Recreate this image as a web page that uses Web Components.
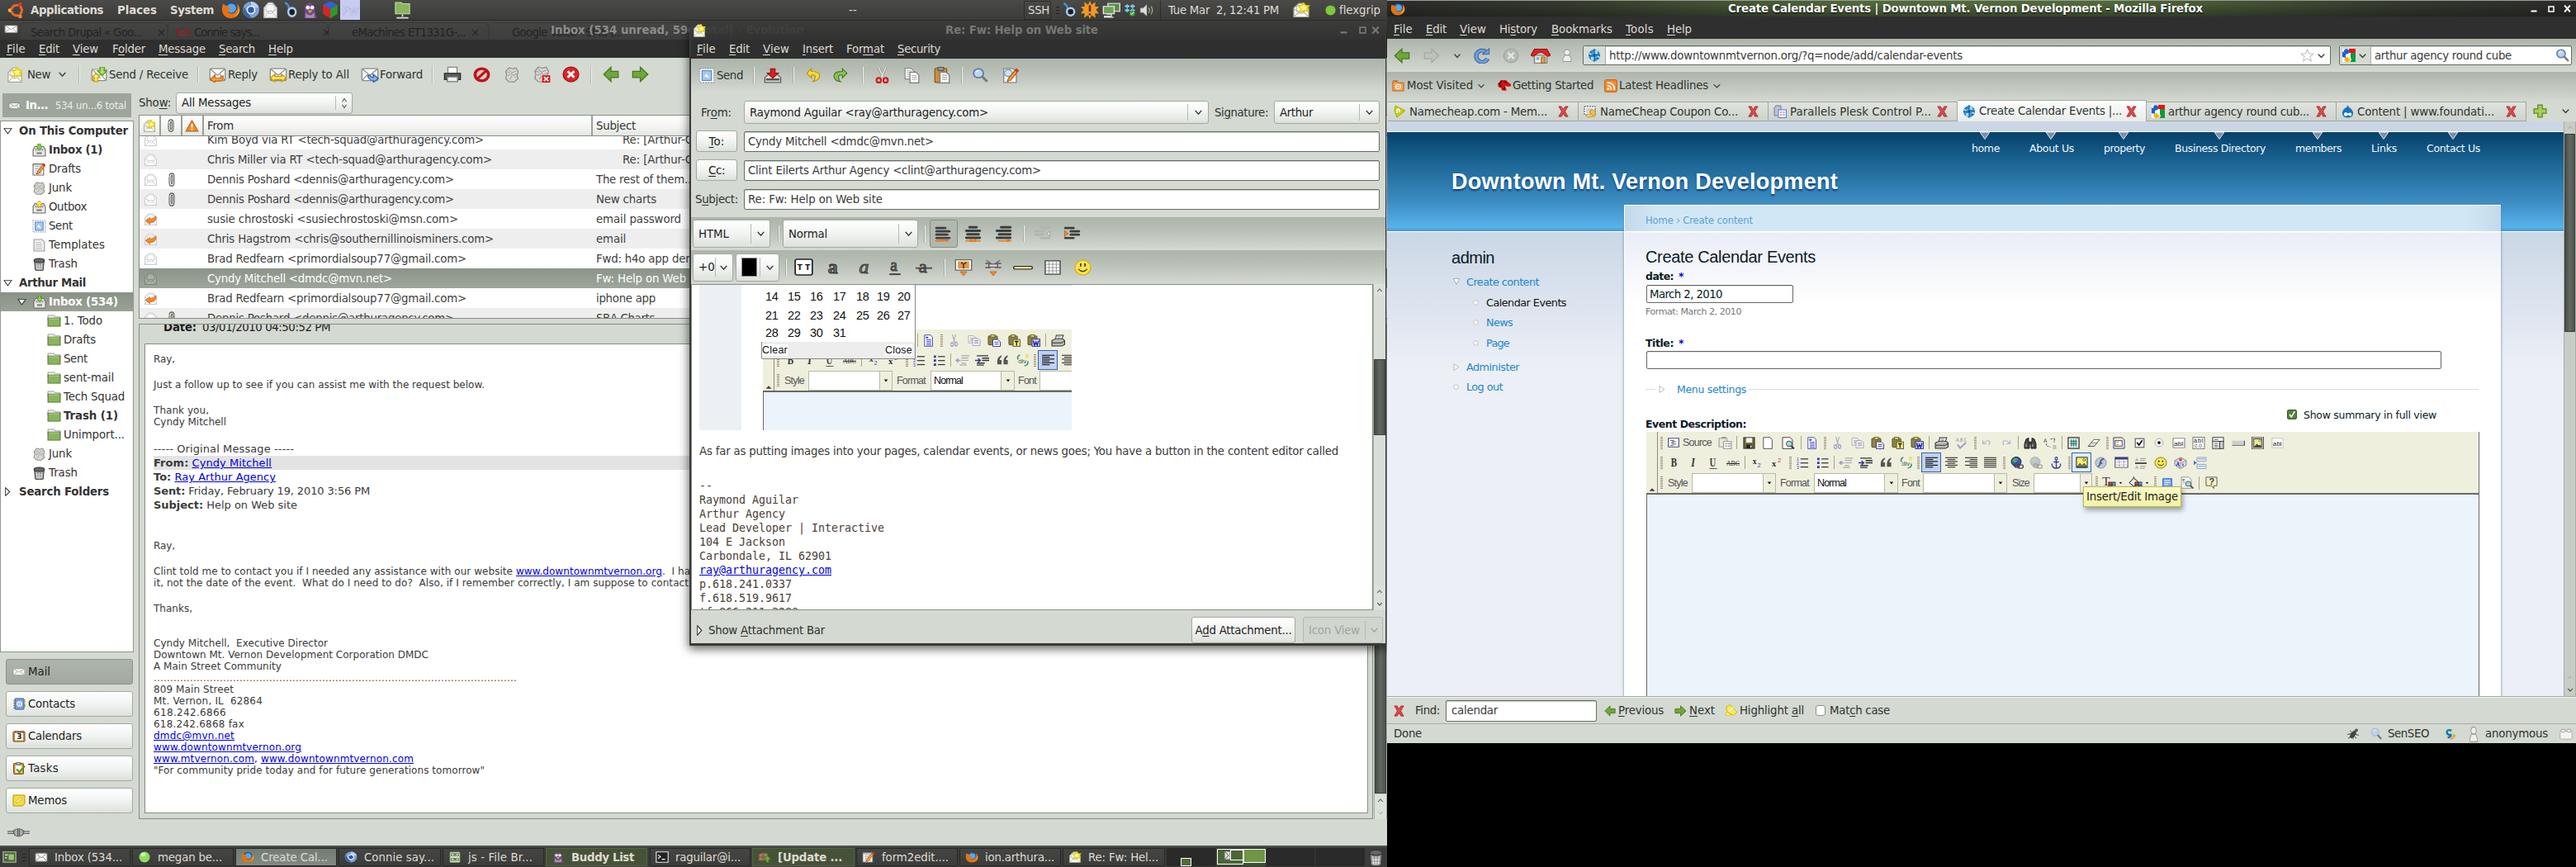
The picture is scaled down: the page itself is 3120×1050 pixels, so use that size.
<!DOCTYPE html>
<html lang="en">
<head>
<meta charset="utf-8">
<title>Desktop</title>
<style>
html,body{margin:0;padding:0;background:#000;width:3120px;height:1050px;overflow:hidden}
</style>
</head>
<body>
<desk-top></desk-top>
<script>
const BASE = `*{box-sizing:border-box}:host{display:block}
.row{display:flex;align-items:center;flex:none}
.row>span{flex:none;display:flex;align-items:center;white-space:nowrap;height:100%}
.col{display:flex;flex-direction:column}
.sep{width:1px;height:20px;background:#b3bab0;box-shadow:1px 0 #eef1ed}
.btn{display:flex;align-items:center;border:1px solid #a3aaa0;border-radius:3px;background:linear-gradient(#fff,#f3f5f3 45%,#dde1dc);color:#222;flex:none}
.in{display:flex;align-items:center;border:1px solid #666c64;border-radius:2px;background:#fff;color:#3a3a3a;box-shadow:inset 0 1px #ccd0ca;flex:none}
`;
/* ---------- icon drawings, all in a 16 x 16 box ---------- */
const env = (c='#fff',s='#8a8f88') => `<rect x="1" y="2.5" width="14" height="11.5" rx="1" fill="${c}" stroke="${s}"/><path d="M1.5 3l6.5 6 6.5-6M1.5 13.5L6 8M14.500 13.500L10 8" fill="none" stroke="${s}" stroke-width=".9"/>`;
const star = `<path d="M10 .5l1.500 2.800 3.300.2-2 2.800 1 3.200-3.300-1-3 1.600.3-3.400-2.300-2.500 3.300-.7z" fill="#fff6a0" stroke="#ecd000" stroke-width="1.300"/>`;
const openEnv = (c='#fff',s='#aaa') => `<path d="M1.500 6L6 1h4l4.500 5v9.500h-13z" fill="${c}" stroke="${s}"/><rect x="4" y="3" width="8" height="6" fill="${c}" stroke="${s}" stroke-width=".6"/><path d="M2 15l5-6h2l5 6M2 7l5 4.500h2L14 7" fill="none" stroke="${s}" stroke-width=".8"/>`;
const doc = (x,y,w,h,f='#fff',s='#777') => `<path d="M${x} ${y}h${w-3}l3 3v${h-3}h-${w}z" fill="${f}" stroke="${s}"/>`;
const lines = (x,y,w,n,d,c,sw=1) => { let r=''; for(let i=0;i<n;i++) r+=`<path d="M${x} ${y+i*d}h${w}" stroke="${c}" stroke-width="${sw}"/>`; return r; };
const firefox = `<circle cx="8" cy="8" r="7" fill="#1c4f9c"/><circle cx="8.500" cy="6.500" r="4" fill="#5aa7e0"/><path d="M1.500 2.500Q0 6 .8 9.500 2.500 15.500 8.500 15.500 15 15 15.500 8 15.500 4 13 2.200 14.500 6 12.500 9 10 12.500 6.500 10.500 4.500 9 6.500 8.200L8 7.500Q6 6.500 5.500 5 4 4 1.500 2.500z" fill="#e8720c"/><path d="M14.500 5q1 6-4 8.500 4-1 4.800-5z" fill="#ffcf3a"/>`;
const redX = `<path d="M2 1h3.500L8 5l2.500-4H14l-3.800 7L14 15h-3.500L8 11l-2.500 4H2l3.800-7z" fill="#d94a4a" stroke="#a32020" stroke-width=".8"/>`;
const google = `<rect width="16" height="16" fill="#fff"/><path d="M8 0h8v5H8z" fill="#e11"/><path d="M10 5h6v11H9q3-2 1-5z" fill="#0b9a3c"/><path d="M0 3l4 3v5L0 10z" fill="#1a5fd0"/><ellipse cx="5" cy="3.500" rx="3" ry="3.200" fill="#1a5fd0"/><ellipse cx="6" cy="13" rx="3.500" ry="3" fill="#f6b50c"/><path d="M6 7q4 1 2 5" stroke="#fff" stroke-width="2" fill="none"/>`;
const globe = `<circle cx="8" cy="8" r="7" fill="#2b8fd0"/><path d="M2 5h5v3H2zM8 2h4v4H8zM9 8h5v3H9zM4 10h4v4H4z" fill="#9fd8f4"/><path d="M8 0v16M1 8h14M3 4l10 8" stroke="#0a4c86" stroke-width="1"/>`;
const mag = (c='#5f7fa8') => `<circle cx="6.500" cy="6" r="4.800" fill="#b9d5f2" stroke="${c}" stroke-width="1.500"/><path d="M10 9.500l5 5.500" stroke="#777" stroke-width="2.400"/><path d="M4 5q1-2 3-2" stroke="#fff" fill="none"/>`;
const greenL = `<path d="M8 1v4h7v6H8v4L1 8z" fill="#6ea83a" stroke="#47761f"/>`;
const greenR = `<path d="M8 1v4H1v6h7v4l7-7z" fill="#6ea83a" stroke="#47761f"/>`;
const al = (a,c='#333') => a.map((p,i)=>`<path d="M${p[0]} ${1.500+i*2.600}h${p[1]}" stroke="${c}" stroke-width="1.300"/>`).join('');
const gal = (a,c='#3c3f3c') => a.map((p,i)=>`<path d="M${p[0]+.8} ${1.800+i*3.400}h${p[1]-1.600}" stroke="${c}" stroke-width="2.300" stroke-linecap="round"/>`).join('');
const paste = (x='') => `<rect x="1" y="2" width="11" height="11.500" rx="1" fill="#8c8446" stroke="#55502a"/><rect x="4" y=".5" width="5" height="3" fill="#ddd34a" stroke="#55502a" stroke-width=".8"/>${x}`;
const trash = `<path d="M2.500 4l1 11q4 1.500 9 0l1-11z" fill="#9a9a9a" stroke="#444"/><ellipse cx="8" cy="3.500" rx="6" ry="2.500" fill="#666" stroke="#333"/><path d="M5 7l1 8M8 7v8M11 7l-1 8M4 10h8M4 13h8" stroke="#e4e4e4" stroke-width=".7"/>`;
const junk = `<path d="M5 1l4 1 3-1 2 4-1 4 1 3-4 3.500-5-.5-3-3 1-4-1-3z" fill="#d8d8d2" stroke="#8f8f8a"/><path d="M5 3l3 3 4-2M4 9l4-2 4 4M6 13l2-4M3 5l3 1M10 8l3-1" fill="none" stroke="#999" stroke-width=".8"/>`;
const tray = `<path d="M1 7.500l2-4h10l2 4v7.500H1z" fill="#e9e9e6" stroke="#666"/><path d="M3 8h10M3 6.500h10" stroke="#888" stroke-width=".8"/><path d="M5 10.500h6v2H5z" fill="#777"/>`;
const folder = `<path d="M1 1h7l1 2h6v4H1z" fill="#f1f1ee" stroke="#888" stroke-width=".8"/><rect x="1" y="4.500" width="14" height="10.500" fill="#8bb55c" stroke="#507a2c"/><path d="M2 5.500h12" stroke="#b6d492"/>`;
const person = (c='#eee') => `<circle cx="8" cy="4.500" r="3.500" fill="${c}" stroke="#999"/><path d="M5 8h6l2 4v3.500H3V12z" fill="${c}" stroke="#999"/>`;
const pencil = `<path d="M13 1l2 2-7 10-3 1 1-3z" fill="#f0a030" stroke="#a5541c" stroke-width=".8"/><path d="M13 1l2 2-1.500 2-2-2z" fill="#e03030"/>`;
const smile = `<circle cx="8" cy="8" r="7" fill="#f7e95e" stroke="#8a7a1a"/><circle cx="5.700" cy="6" r="1" fill="#222"/><circle cx="10.300" cy="6" r="1" fill="#222"/><path d="M4 9q4 5 8 0" fill="none" stroke="#333"/>`;
const tx = (s,x,y,sz,c='#333',e='') => `<text x="${x}" y="${y}" font-size="${sz}" fill="${c}" ${e}>${s}</text>`;
const serif = 'font-family="Liberation Serif" font-weight="bold"';
const pic = `<rect x="1" y="1" width="14" height="14" fill="#f6ef6a" stroke="#111"/><path d="M1.500 14.500l4-5 2.500 3 3-3 3.500 5z" fill="#777" stroke="#111" stroke-width=".7"/><circle cx="11" cy="4.500" r="1.500" fill="#fff" stroke="#111" stroke-width=".7"/>`;
const ICON = {
ubuntu:`<circle cx="8.500" cy="8" r="4.800" fill="none" stroke="#e8642c" stroke-width="2.400"/><circle cx="2.300" cy="8" r="1.800" fill="#f2b632"/><circle cx="11.700" cy="2.300" r="1.800" fill="#d93a20"/><circle cx="11.700" cy="13.700" r="1.800" fill="#f0872c"/><path d="M3.500 8h2M11 4l-1 1.500M11 12l-1-1.500" stroke="#3c3c3a" stroke-width="1"/>`,
firefox,
chromium:`<circle cx="8" cy="8" r="7.300" fill="#7ba3d4"/><path d="M8 .7A7.300 7.300 0 0 1 15 6H8z" fill="#b7d0ec"/><path d="M1.500 5l4 6 3 4.300Q2 15 .8 9z" fill="#3b66a6"/><circle cx="8" cy="8" r="3.300" fill="#2c5aa8" stroke="#eef" stroke-width="1.200"/>`,
evo:openEnv('#f6f6f6','#bbb'), env:env(), envw:env('#f3f4f2','#7d827b'), envg:openEnv('#fff','#ccc'), envgs:openEnv('#a9b0a6','#7e867c'),
bblue:`<path d="M2 1q3 1 4 4v7" stroke="#4d90e0" stroke-width="2" fill="none"/><circle cx="9.500" cy="10" r="4" fill="#1d1d1d" stroke="#a9cdf4" stroke-width="2.200"/>`,
pidgin:`<path d="M3 4q5-6 9 0l1 8 2 3H2l1-3z" fill="#6e4a86"/><circle cx="6" cy="5.500" r="1.800" fill="#fff"/><circle cx="10" cy="5.500" r="1.800" fill="#fff"/><path d="M6 8h4l-2 3z" fill="#f3a12c"/><path d="M4 10q4 5 8 0v5H4z" fill="#a98bc0"/>`,
cube:`<path d="M8 .5l7 3v8l-7 4-7-4v-8z" fill="#d22"/><path d="M8 7l7-3.500v8l-7 4z" fill="#2a9a2a"/><path d="M8 .5l7 3L8 7 1 3.500z" fill="#2d62d8"/>`,
pw:`<rect width="16" height="16" fill="#c6cdf0"/>${tx('Pw',1.500,12,9.500,'#eef0fb','font-family="DejaVu Sans" stroke="#8d95c8" stroke-width=".3"')}`,
netfolder:`<path d="M2 1.500h5l1 1h6v9H2z" fill="#8bb55c" stroke="#c4dca6" stroke-width=".7"/><path d="M8 12v2M3 15h10" stroke="#ddd" stroke-width="1.200"/>`,
burst:`<path d="M8 0l1.500 3.500L13 1l-.5 4L16 5l-2.500 3L16 11l-3.500 0 .5 4-3.500-2.500L8 16l-1.500-3.500L3 15l.5-4L0 11l2.500-3L0 5h3.500L3 1l3.500 2.500z" fill="#f39a1e"/><path d="M8 4v5.500M8 11v1.800" stroke="#5a2c00" stroke-width="1.800"/>`,
net:`<rect x="5" y="1" width="10.500" height="8" fill="#5a8a48" stroke="#ddd"/><rect x="1" y="4" width="9.500" height="7.500" fill="#6fa057" stroke="#e6e6e0"/><path d="M4 12h4v2H2v1h8" stroke="#ddd" fill="none"/>`,
dropbox:`<path d="M4.500 1L8 3.500 4.500 6 1 3.500zM11.500 1L15 3.500 11.500 6 8 3.500zM4.500 6L8 8.500 4.500 11 1 8.500zM11.500 6L15 8.500 11.500 11 8 8.500z" fill="#7cc4ee"/><circle cx="11" cy="12" r="3.600" fill="#3fa13a"/><path d="M9 12l1.500 1.500L13 10.500" stroke="#fff" fill="none"/>`,
speaker:`<path d="M1 5.500h3l4-4v13l-4-4H1z" fill="#ddd" stroke="#888" stroke-width=".6"/><path d="M10 5q2 3 0 6M12.500 3.500q3 4.500 0 9" stroke="#8faf70" fill="none" stroke-width="1.200"/>`,
newmail:openEnv('#fff','#a9a98f')+star,
sendrecv:env()+`<path d="M9 0h4v4h2.500L11 9 6.500 4H9z" fill="#a9dd6e" stroke="#4a9a1c"/><path d="M3.500 15v-4H1l4-4.500L9 11H6.500v4z" fill="#ffe96a" stroke="#c9a400"/>`,
reply:env()+`<g transform="translate(0 4) scale(.95)"><path d="M6 5L1.500 9 6 13v-2h5q3 0 3-5h-2q0 2-2 2H6z" fill="#f7a04a" stroke="#d2600a"/></g>`,
replyall:env()+`<path d="M5 8L1 11.500 5 15v-2h6v2l4-3.500L11 8v2H5z" fill="#ffe56a" stroke="#c79c00"/>`,
forward:env()+`<path d="M11 8l4.500 4L11 16v-2q-4 0-5-5h2q1 2 3 2z" fill="#8ab4ea" stroke="#3465a4"/>`,
print:`<path d="M4 1h8v6H4z" fill="#fff" stroke="#888"/><path d="M1 7h14v6H1z" fill="#5a5d5a" stroke="#2c2c2c"/><path d="M3.500 10.500h9V15h-9z" fill="#eee" stroke="#777"/>`,
no:`<circle cx="8" cy="8" r="6.200" fill="#e8c4c4" stroke="#b8161a" stroke-width="2.800"/><path d="M4 12L12 4" stroke="#b8161a" stroke-width="2.600"/>`,
junk, junkx:junk+`<rect x="8.500" y="9" width="7" height="7" fill="#d11"/><path d="M10 10.500l4 4m0-4l-4 4" stroke="#fff" stroke-width="1.300"/>`,
stop:`<circle cx="8" cy="8" r="7.200" fill="#d9252b" stroke="#a01015"/><path d="M5 5l6 6m0-6l-6 6" stroke="#fff" stroke-width="2.200"/>`,
greenL, greenR,
inbox:tray+`<path d="M6.500 0h3v3H12L8 7.500 4 3h2.500z" fill="#8bd04a" stroke="#3f8d14" stroke-width=".8"/>`,
outbox:tray+`<path d="M6.500 7.500h3V4.500H12L8 0 4 4.500h2.500z" fill="#ffe45a" stroke="#c29b00" stroke-width=".8"/>`,
drafts:`<rect x="1" y="1.500" width="12" height="13.500" fill="#fff" stroke="#666"/>${lines(3,5,8,4,2.500,'#999')}<path d="M1 3h12" stroke="#444" stroke-dasharray="1 1"/>${pencil}`,
sent:`<rect x="1" y="1" width="14" height="14" fill="#fff" stroke="#8f97a5" stroke-dasharray="1.500 1"/><rect x="3.500" y="3" width="9" height="10" fill="#a8c8ec" stroke="#5a8ac6"/><path d="M5.500 9l5 1-3-4z" fill="#fff"/>`,
templates:doc(2,1,12,14,'#eee','#999')+lines(4,5,7,4,2.500,'#bbb'), trash, folder,
mailbtn:env('#f4f4f2','#9a9f98'),
contacts:`<rect x="3" y="1" width="11" height="14" rx="1" fill="#7ba4d8" stroke="#2f5c9c"/><circle cx="8.500" cy="8" r="2.800" fill="none" stroke="#fff" stroke-width="1.200"/><circle cx="8.500" cy="8" r="1" fill="#fff"/><path d="M1 4h4M1 7h4M1 10h4M1 13h4" stroke="#777"/><path d="M14.800 2v4" stroke="#e08a2c" stroke-width="1.500"/><path d="M14.800 8v4" stroke="#69a835" stroke-width="1.500"/>`,
cal:`<rect x="1" y="2" width="14" height="13" rx="1" fill="#c98a3a" stroke="#7c4f16"/><rect x="3" y="4" width="10" height="9.500" fill="#fff"/>${tx('3',5.300,12,9,'#222','font-family="DejaVu Sans" font-weight="bold"')}<path d="M4 1v3M7 1v3M10 1v3M13 1v3" stroke="#555"/>`,
tasks:`<rect x="1.500" y="1.500" width="12" height="14" rx="1" fill="#c98a3a" stroke="#7c4f16"/><rect x="3.500" y="4" width="8" height="9.500" fill="#fff"/><rect x="5" y=".5" width="5" height="3" fill="#aaa" stroke="#555" stroke-width=".6"/><path d="M5 9l3.500 4L15 5" stroke="#4f9a20" stroke-width="2.200" fill="none"/>`,
memos:`<path d="M1 1h14v11l-3 3H1z" fill="#f5dc3a" stroke="#b89800"/><path d="M4 10l6-6 2 1-6 6z" fill="#fff" stroke="#b89800" stroke-width=".7"/>`,
plug:`<path d="M0 6h5M0 9h5M11 6h5M11 9h5" stroke="#666" stroke-width="1.500"/><path d="M7.500 2Q3.500 4 4.500 8q0 4 3 5.500zM8.500 2q4 2 3 6 0 4-3 5.500z" fill="#aaa" stroke="#555" stroke-width=".7"/>`,
clip:`<path d="M4 5v6q0 4.200 4 4.200t4-4.200V4.500Q12 1 8 1T4.200 4.500M7 4.500v6.500q0 1.500 1.200 1.500T9.500 11V4.500q0-1.200-1.200-1.200T7 4.500" fill="none" stroke="#6c6f6a" stroke-width="1.600"/>`,
warn:`<path d="M8 1l7 14H1z" fill="#f28a2c" stroke="#b85a0a"/><path d="M8 5v5M8 11.500v1.800" stroke="#fff" stroke-width="1.800"/>`,
replied:openEnv('#fff','#ccc')+`<path d="M7 6L2 10l5 4.500v-2.500q5 1 7-4V4q-3 4-7 4z" fill="#f58a2a" stroke="#cf5c08" stroke-width=".8"/>`,
down:`<path d="M2.500 4.500L8 11.500l5.500-7" fill="none" stroke="#3c403b" stroke-width="2.200"/>`,
downg:`<path d="M2.500 4.500L8 11.500l5.500-7" fill="none" stroke="#a0a69e" stroke-width="2"/>`,
up:`<path d="M2.500 11.500L8 4.500l5.500 7" fill="none" stroke="#555b55" stroke-width="2.200"/>`,
upg:`<path d="M2.500 11.500L8 4.500l5.500 7" fill="none" stroke="#a0a69e" stroke-width="2"/>`,
updown:`<path d="M3 6l5-4.500L13 6M3 10l5 4.500L13 10" fill="none" stroke="#444" stroke-width="1.500"/>`,
triD:`<path d="M1.500 3h13L8 14z" fill="#fff" stroke="#222" stroke-width="1.500"/>`,
triR:`<path d="M3 1l9 7-9 7z" fill="#fff" stroke="#222" stroke-width="1.600"/>`,
triDg:`<path d="M1 1h14L8 15z" fill="#fff" stroke="#999" stroke-width="1.500"/>`,
triRg:`<path d="M2 1l12 7-12 7z" fill="#fff" stroke="#aaa" stroke-width="1.500"/>`,
ring:`<circle cx="8" cy="8" r="6.500" fill="#f6f8fb" stroke="#a9adb3" stroke-width="1.500"/>`,
savedraft:`<path d="M1 10l3-3h8l3 3v5H1z" fill="#d8d8d6" stroke="#666"/><path d="M2 12h12" stroke="#555" stroke-width="2"/><path d="M6 1h4v4.500h3L8 10.500 3 5.500h3z" fill="#dc2020" stroke="#980a0a" stroke-width=".8"/>`,
undo:`<path d="M6 1L1 6l5 5V8q5-1 4 3 0 2-3 4 7-1 8-6Q15 4 6 4z" fill="#f7d83a" stroke="#b79400"/>`,
redo:`<path d="M10 1l5 5-5 5V8Q5 7 6 11q0 2 2 4-7-1-7-6 0-5 9-5z" fill="#8cc152" stroke="#3f7a1c"/>`,
cut:`<path d="M4 0l5 10M12 0L7 10" stroke="#8f938e" stroke-width="2.400"/><path d="M4 0l5 10M12 0L7 10" stroke="#e8eae7" stroke-width="1.200"/><circle cx="4.500" cy="13" r="2.300" fill="none" stroke="#cf1b1b" stroke-width="1.800"/><circle cx="11.500" cy="13" r="2.300" fill="none" stroke="#cf1b1b" stroke-width="1.800"/>`,
copy:doc(1,.5,9,11,'#fff','#888')+lines(2.500,3,5,4,2,'#bbb')+doc(6,4.500,9,11,'#fff','#777')+lines(8,8,5,3,2,'#aaa'),
paste:`<rect x="1" y="1.500" width="11.500" height="13.500" rx="1" fill="#c9903c" stroke="#8a5a16"/><rect x="4" y=".5" width="5.500" height="3" fill="#999" stroke="#444" stroke-width=".7"/>${doc(6,5,9,10.500,'#fff','#777')}${lines(8,8,5,3,2,'#aaa')}`,
mag:mag(), magl:mag('#aabccc'),
findrep:doc(2,1,11,14,'#fff','#888')+`<circle cx="6" cy="5.500" r="3.500" fill="#cfe2f5" stroke="#7a9cc4"/>`+pencil,
alL:gal([[1,10],[1,14],[1,12],[1,14]])+`<path d="M5 12.800l-4.500 2 4.500 1.200v-.8h8v-1.300H5z" fill="#f28a2c" stroke="#c45a08" stroke-width=".4"/>`,
alC:gal([[4,8],[1,14],[2,12],[1,14]])+`<path d="M1 15h5M10 15h5M5 13.500l3 1.500-3 1M11 13.500L8 15l3 1" stroke="#ee7a14" fill="none" stroke-width="1.200"/>`,
alR:gal([[5,10],[1,14],[3,12],[1,14]])+`<path d="M3 15h11M11 13.300l3 1.500-3 1.200" stroke="#ee7a14" fill="none" stroke-width="1.300"/>`,
outd:gal([[6,9],[1,9],[1,9],[6,9]],'#b0b5ae')+`<path d="M15 5v5l-3-2.500z" fill="#eee" stroke="#aaa"/>`,
ind:gal([[1,9],[6,9],[6,9],[1,9]])+`<path d="M1 4.500v6l3.500-3z" fill="#f28a2c" stroke="#b85a0a" stroke-width=".6"/>`,
tt:`<rect x=".8" y=".8" width="14.400" height="14.400" rx="1.500" fill="#fff" stroke="#222" stroke-width="1.200"/>${tx('TT',2.200,11,8,'#111','font-family="Liberation Mono" font-weight="bold" textLength="11.500"')}`,
ab:tx('a',1.500,14,19,'#666b66',serif+' stroke="#333" stroke-width=".8"'),
ai:tx('a',2,14,19,'#777b76','font-family="Liberation Serif" font-style="italic" stroke="#444" stroke-width=".9"'),
au:tx('a',3,11.500,17,'#777b76','font-family="Liberation Serif" stroke="#444" stroke-width=".9"')+`<path d="M2 14.500h12" stroke="#444" stroke-width="1.600"/>`,
as:tx('a',3,13.500,18,'#777b76','font-family="Liberation Serif" stroke="#444" stroke-width=".9"')+`<path d="M0 9h16" stroke="#444" stroke-width="1.400"/>`,
gimg:`<rect x="1" y=".5" width="14" height="10" fill="#fff" stroke="#666"/><rect x="3" y="2" width="10" height="7" fill="#d99b4c"/><path d="M8 9V5l-2-2M8 5l2.500-2" stroke="#4a2a0c" fill="none"/><path d="M5 12h6l-3 4z" fill="#f28a2c" stroke="#c45a08" stroke-width=".5"/>`,
glink:`<path d="M1 4h4q2 2 6 0h4M1 8h4q2-2 6 0h4" stroke="#555" fill="none" stroke-width="1.200"/><rect x="4" y="4.500" width="8" height="3" rx="1.500" fill="#ccc" stroke="#555" stroke-width=".8"/><path d="M2 1l4 3M14 1l-4 3" stroke="#666"/><path d="M5 12h6l-3 4z" fill="#f28a2c" stroke="#c45a08" stroke-width=".5"/>`,
grule:`<rect x=".5" y="6.800" width="15" height="2.800" rx="1" fill="#f4dc8c" stroke="#222" stroke-width=".9"/>`,
gtable:`<rect x=".8" y=".8" width="14.400" height="14.400" fill="#fff" stroke="#333"/><path d="M4.500 1v14M8 1v14M11.500 1v14M1 4.500h14M1 8h14M1 11.500h14" stroke="#777" stroke-width=".6"/>`,
smile, gsmile:`<circle cx="8" cy="8" r="7.300" fill="#fbe34a" stroke="#d5a800" stroke-width=".8"/><path d="M6 4v3M10 4v3" stroke="#333" stroke-width="1.300"/><path d="M4 9.500q4 4.500 8 0" fill="none" stroke="#333"/>`,
reload:`<path d="M12.500 4.500A5.500 5.800 0 1 0 13.500 11" fill="none" stroke="#2f5c9c" stroke-width="4"/><path d="M12.500 4.500A5.500 5.800 0 1 0 13.500 11" fill="none" stroke="#6f9fd8" stroke-width="2.600"/><path d="M8.500 6.500H15V.5z" fill="#6f9fd8" stroke="#2f5c9c" stroke-width=".7"/>`,
stopg:`<circle cx="8" cy="8" r="7" fill="#b5bab3" stroke="#a1a79f"/><path d="M5 5l6 6m0-6l-6 6" stroke="#e3e6e2" stroke-width="2"/>`,
fwdg:`<path d="M8 1v4H1v6h7v4l7-7z" fill="#bdc3bb" stroke="#a4aaa2"/>`,
home:`<path d="M3 8h10v7.500H3z" fill="#f4efe4" stroke="#8c8577"/><path d="M0 8L3 2h10l3 6-2 1-5-4H7L2 9z" fill="#dc2424" stroke="#9a1010" stroke-width=".7"/><rect x="8.500" y="9.500" width="3" height="6" fill="#d99b4c" stroke="#7c4f16" stroke-width=".5"/><rect x="4.500" y="9.500" width="2.500" height="3" fill="#7fb0e6"/>`,
person:person(), globe, google, redX, folderBm:`<path d="M1 3h5l1 1.500h8V15H1z" fill="#f3a257" stroke="#c45a08"/><circle cx="8" cy="9.500" r="3" fill="none" stroke="#fff" stroke-width="1.100"/><circle cx="8" cy="9.500" r="1" fill="#fff"/><path d="M1 2h7" stroke="#c45a08"/>`,
dino:`<path d="M4 1h6l3 3 3 2v3l-4 .5-3-1v2l2 3-2 1.500-4-1-1-3-3-1-1-4z" fill="#d41414"/><path d="M5 2L2 6l2 4M8 3l3 2M9 10l-2 3" stroke="#300" stroke-width="1.300" fill="none"/>`,
rss:`<rect x=".7" y=".7" width="14.600" height="14.600" rx="1.500" fill="#f28a2c" stroke="#c45a08"/><circle cx="4.700" cy="11.500" r="1.500" fill="#fff"/><path d="M3.500 7.500q5 0 5 5.500M3.500 4q9 0 9 9" fill="none" stroke="#fff" stroke-width="1.700"/>`,
ncheap:`<path d="M3 1l12 6L5 15 2 7z" fill="#c8cf1a" stroke="#a6ac10"/><path d="M5 10V6q3-2 3 1v2" stroke="#fff" fill="none" stroke-width="1.500"/>`,
coupon:`<rect x="1" y="2" width="13" height="10" fill="#fff" stroke="#444" stroke-dasharray="2 1"/><rect x="3" y="4" width="8" height="6" fill="#ccd3da"/><rect x="8" y="6" width="6" height="8" rx="1" fill="#ecc14e" stroke="#b5831c" stroke-width=".7"/><ellipse cx="7" cy="13" rx="4" ry="2" fill="#f2ce6a" stroke="#b5831c" stroke-width=".7"/>`,
plesk:`<path d="M1 3l2-2h6v12H1z" fill="#b8c4d4" stroke="#6f7f96"/><rect x="6" y="6" width="9.500" height="9.500" fill="#fff" stroke="#5a7ad0"/><path d="M8 9h2M8 12h2" stroke="#d33"/><path d="M11 9h3M11 12h3" stroke="#57c"/>`,
drupal:`<path d="M8 .5q1 2 4 4 3.500 3 3 6.500Q14 15.500 8 15.500T1 11q-.5-4 3-6.500 3-1.500 4-4z" fill="#1576bd"/><path d="M3 12q0-3 3-3 2 1 2.500 1.500Q10 9 12 9.500q1.500 1 1 3-1.500 1.500-3 .5-1.500-1.300-3 0-2 1.500-4-1z" fill="#fff"/>`,
plus:`<path d="M5.500 1h5v4.500H15v5h-4.500V15h-5v-4.500H1v-5h4.500z" fill="#a5cf5c" stroke="#5c8c1c" stroke-width="1.200"/>`,
starO:`<path d="M8 1l2 4.800 5 .4-3.800 3.300L12.500 15 8 12l-4.500 3 1.300-5.500L1 6.200l5-.4z" fill="#fff" stroke="#c0c3bf"/>`,
hl:`<path d="M2 5q0-4 5-4l8 9-5 4-7-4z" fill="#fbe85a" stroke="#d6b400"/><path d="M1 14l2-4 5 4z" fill="#fff3a0" stroke="#e6c800"/><path d="M5 9l5-5" stroke="#fff" stroke-width="1.200"/>`,
bug:`<ellipse cx="8" cy="9" rx="2.800" ry="5.500" fill="#444" transform="rotate(35 8 9)"/><path d="M1 9l5-1M2 14l4-3M8 15l0-4M4 4l3 3M15 10l-4-1M12 14l-3-3" stroke="#333" stroke-width=".9"/><circle cx="12" cy="3.500" r="2" fill="#555"/>`,
ssync:`<circle cx="7.500" cy="7.500" r="6.500" fill="#bfe4c0"/><path d="M11 4Q5 2 5 6t5 3.500Q11 12 6 13" fill="none" stroke="#1d6fc4" stroke-width="2.600"/><path d="M9 15q5-1 5-5l2 1" stroke="#e8a21c" fill="none" stroke-width="2"/>`,
lego:`<rect x=".8" y="4" width="14.400" height="11" rx="1" fill="#f3f3f1" stroke="#aaa"/><rect x="2" y="1.500" width="5" height="3.500" rx="1" fill="#fff" stroke="#999"/><rect x="9" y="1.500" width="5" height="3.500" rx="1" fill="#fff" stroke="#999"/>`,
checkg:`<rect x=".7" y=".7" width="14.600" height="14.600" rx="2" fill="#54843c" stroke="#2c5018" stroke-width="1.200"/><path d="M4 8l3 4 5.500-9" stroke="#fff" stroke-width="2" fill="none"/>`,
desk:`<rect x=".8" y=".8" width="14.400" height="14.400" fill="#4a6a34" stroke="#a8b8a0" stroke-width="1.200"/><path d="M3 4h3v2H3zM3 8h2v2H3z" fill="#cde"/><rect x="7" y="4" width="6" height="8" fill="#9dc27c"/>`,
greendot:`<ellipse cx="8" cy="8" rx="6.500" ry="7.300" fill="#8be05a"/><ellipse cx="6.500" cy="4.500" rx="3" ry="2.500" fill="#d4f7bc"/>`,
online:`<circle cx="8" cy="8" r="7.500" fill="#7cc83c"/>`,
fileman:`<rect x="2" y="1" width="12" height="14.500" rx="1" fill="#e7ede0" stroke="#6f8a5c"/><path d="M3.500 3h9v3.500h-9zM3.500 9.500h9V13h-9z" fill="#b6d29b" stroke="#54743c" stroke-width=".8"/><path d="M6.500 4.500h3M6.500 11h3" stroke="#222"/>`,
term:`<rect x=".8" y=".8" width="14.400" height="14.400" fill="#222" stroke="#ddd" stroke-width="1.200"/><path d="M3 5l3 2.500L3 10M7.500 11h4" stroke="#fff" fill="none" stroke-width="1.200"/>`,
update:`<path d="M1 4l5-2 6 1v10H1z" fill="#a08060" stroke="#6a5038"/><path d="M1 8h11M6 2v11" stroke="#6a5038"/><path d="M10 15.500v-4H7l4.500-5.500 4.500 5.500h-3v4z" fill="#6fa83c" stroke="#3d6c1a" stroke-width=".7"/>`,
/* rich text editor glyphs */
cSource:`<rect x=".8" y="1" width="14.400" height="14" fill="#fff" stroke="#444a8a" stroke-width="1.300"/><path d="M3.500 4.500h5M5.500 6.500h6M4.500 8.500h4M6.500 10.500h5M3.500 12.500h4" stroke="#333"/>`,
cTempl:`<rect x="1" y="2" width="9" height="11" fill="#eceadb" stroke="#999"/><path d="M4 1h5" stroke="#888" stroke-width="1.600"/><rect x="6" y="6" width="9" height="9.500" fill="#f4f3ea" stroke="#999"/><path d="M8 9h2M11 9h3M8 12h2M11 12h3" stroke="#8a8ab8"/>`,
cSave:`<rect x="1" y="1" width="14" height="14" fill="#6f6b35" stroke="#222"/><rect x="4" y="1.500" width="8" height="6" fill="#f4f4f4"/><rect x="4.500" y="10" width="7.500" height="5" fill="#222"/><rect x="9.500" y="11" width="1.700" height="3" fill="#ddd"/>`,
cNew:doc(1,.8,13,14.500,'#fff','#444'), cPrev:doc(1,.8,12,14.500,'#fff','#444')+`<circle cx="9" cy="9" r="3.500" fill="#9fdcdc" stroke="#444"/><path d="M11.500 12l3.500 3.500" stroke="#333" stroke-width="2"/>`,
cDoc:doc(1,.8,13,14.500,'#fff','#333a9a')+`<path d="M3 4h4" stroke="#33d" stroke-width="2"/>`+lines(4,7,8,4,2.200,'#22d'),
cCut:`<path d="M5 0l4 10M11 0L7 10" stroke="#aaaab0" stroke-width="1.500"/><circle cx="4.500" cy="13" r="2.300" fill="none" stroke="#9a9ac8" stroke-width="1.500"/><circle cx="11.500" cy="12.500" r="2.300" fill="none" stroke="#9a9ac8" stroke-width="1.500"/>`,
cCopy:doc(1,.8,9,10.500,'#f7f6ee','#aaa')+lines(3,4.500,5,3,2,'#aab')+doc(6,4.500,9,11,'#f7f6ee','#9a9ac0')+lines(8,8,5,3,2,'#99b'),
cPaste:paste(doc(6.500,6.500,9,9,'#fff','#33399a')+lines(8.500,10,5,2,2.500,'#33399a')),
cPasteT:paste(`<rect x="6.500" y="6.500" width="9" height="9" fill="#f6ee6a" stroke="#555"/><path d="M8.500 9h5M11 9v5.500" stroke="#222" stroke-width="1.500"/>`),
cPasteW:paste(`<rect x="6" y="6" width="9.500" height="9.500" fill="#cfd4f6" stroke="#33399a"/><path d="M7.500 8l1.500 6 1.700-4 1.700 4L14 8" stroke="#2a30a0" fill="none" stroke-width="1.500"/>`),
cPrint:`<path d="M5 7l1-6h8l-2 6z" fill="#fff" stroke="#333"/><path d="M1 8l3-2h10l1.500 2v5l-3 2H1z" fill="#bdbdb4" stroke="#333"/><path d="M1 11h11l3-2" stroke="#333" fill="none"/><path d="M7 3h4M7 5h4" stroke="#666" stroke-width=".8"/>`,
cAbc:tx('ABC',1,6.500,6.500,'#999','font-family="DejaVu Sans Mono" textLength="14"')+`<path d="M3 10l3.500 4.500L14 7.500" stroke="#9a9ac8" stroke-width="2" fill="none"/>`,
cUndo:`<path d="M2 4v6h6M2.500 9.500Q7 3 11 4.500T12 13" fill="none" stroke="#aaaacc" stroke-width="1.500"/>`, cRedo:`<path d="M14 4v6H8M13.500 9.500Q9 3 5 4.500T4 13" fill="none" stroke="#aaaacc" stroke-width="1.500"/>`,
cFind:`<path d="M3 3l3-1.500V5l1 3v7H1V9zM13 3l-3-1.500V5L9 8v7h6V9z" fill="#444" stroke="#222"/><path d="M7 6h2v4H7z" fill="#333"/><path d="M3 9v4M11 9v4" stroke="#ccc"/>`,
cRepl:tx('A',0,7,7,'#555','font-family="DejaVu Sans Mono"')+tx('B',10.500,15.500,7,'#999','font-family="DejaVu Sans Mono"')+`<path d="M8 3l5-1-1 5M3 9q1 4 5 4" stroke="#555" stroke-dasharray="2 1" fill="none"/>`,
cSel:`<rect x="1" y="1" width="14" height="14" fill="#f4f3ea" stroke="#444" stroke-width="1.500"/><rect x="4" y="4" width="8" height="8" fill="#7fd6cf"/><path d="M5 3v10M8 3v10M11 3v10M3 6h10M3 9h10" stroke="#356" stroke-width=".7"/>`,
cErase:`<path d="M1 13L8 3h7l-6.500 10z" fill="#ddd" stroke="#444"/><path d="M8 3L15 3l-3 4.500H5z" fill="#fff" stroke="#444" stroke-width=".6"/>`,
cForm:doc(1,1,14,14,'#fdf3a0','#2a34b0')+`<rect x="3" y="5" width="9" height="7" fill="#fff" stroke="#2a34b0"/><path d="M4.500 7h3M4.500 10h3" stroke="#e0b000" stroke-width="1.300"/>`,
cChk:`<rect x="1.500" y="1.500" width="13" height="13" fill="#fff" stroke="#666" stroke-width="1.500"/><path d="M4 7l3 4 5-7" stroke="#111" stroke-width="2.200" fill="none"/>`,
cRad:`<circle cx="8" cy="8" r="6.500" fill="#fff" stroke="#aaa" stroke-width="1.300"/><circle cx="8" cy="8" r="2.500" fill="#111"/>`,
cTxt:`<rect x="1" y="1" width="14" height="14" fill="#fff" stroke="#777"/>`+tx('abl',2,12,8.500,'#222','font-family="Liberation Sans" textLength="11.500"'),
cArea:`<rect x="1" y="0.500" width="14" height="15" fill="#fff" stroke="#777"/>`+tx('abl',2,8,7.500,'#222','font-family="Liberation Sans" textLength="11.500"')+tx('co',3,14,7,'#555','font-family="Liberation Sans" textLength="9"'),
cList:`<rect x="1" y=".8" width="14" height="5" fill="#fff" stroke="#333"/><rect x="1" y="5.800" width="9" height="9.500" fill="#fff" stroke="#333"/><rect x="10" y="5.800" width="5" height="9.500" fill="#ccc" stroke="#333"/><path d="M3 8.500h5M3 11h5M3 13h5M3 3.500h5" stroke="#555"/>`,
cBtn:`<path d="M.5 5h15v7H.5z" fill="#ccc"/><path d="M.5 12.500h15V5" stroke="#555" fill="none" stroke-width="1.300"/>`,
cImgB:`<rect x=".5" y="0" width="15" height="16" fill="#bbb" stroke="#555"/><rect x="3" y="2.500" width="10" height="11" fill="#f1ea8a" stroke="#222" stroke-width=".8"/><path d="M3 13l4-4 2 2 2-1 2 3z" fill="#444"/><circle cx="10.500" cy="5" r="1.200" fill="#fff" stroke="#222" stroke-width=".5"/>`,
cHid:`<rect x="1" y="1" width="14" height="14" fill="#fff" stroke="#888" stroke-dasharray="1 1"/>`+tx('abl',2,12,8.500,'#222','font-family="Liberation Sans" textLength="11.500"'),
cB:tx('B',2.500,14,16,'#333',serif), cI:tx('I',4.500,14,16,'#333',serif+' font-style="italic"'), cU:tx('U',2,12.500,14.500,'#444',serif)+`<path d="M2 15.500h12" stroke="#333"/>`,
cStrike:tx('ABC',0,12,9,'#333','font-family="Liberation Serif" textLength="16" lengthAdjust="spacingAndGlyphs"')+`<path d="M0 9h16" stroke="#333" stroke-width="1.200"/>`,
cSub:tx('x',1,10,13,'#333',serif)+tx('2',9,15,9,'#33c',''), cSup:tx('x',0,14,13,'#333',serif)+tx('2',9,8,9,'#c33',''),
cOl:tx('1',0,5,5.500,'#33c')+tx('2',0,10.500,5.500,'#33c')+tx('3',0,16,5.500,'#33c')+lines(5,3,10,3,5.200,'#333',1.300),
cUl:`<path d="M1 3h3M1 8.200h3M1 13.400h3" stroke="#33399a" stroke-width="3"/>`+lines(6.500,3,9,3,5.200,'#333',1.300),
cOut:`<path d="M7 2h9M7 11.500h5M5 14h8M7 5h8M7 8h8" stroke="#aaa" stroke-width="1.300"/><path d="M6 8H1M3.500 5.500L1 8l2.500 2.500" stroke="#9a9ac8" fill="none" stroke-width="1.400"/>`,
cInd:`<path d="M2 2h13M2 11.500h9M2 14h8M8 5h8M8 8h8" stroke="#333" stroke-width="1.500"/><path d="M0 8h6M3.500 5.500L6 8l-2.500 2.500" stroke="#33399a" fill="none" stroke-width="1.500"/>`,
cQ:`<path d="M1 14h5.500V8H4q0-3 2.500-4.500V1.500Q1 4 1 9zM9 14h5.500V8H12q0-3 2.500-4.500V1.500Q9 4 9 9z" fill="#555"/>`,
cDiv:`<path d="M5 1q-4 2-2 6M10 15q5-1 4-6" stroke="#387" fill="none" stroke-width="1.400"/>`+tx('div',3,11.500,7.500,'#364','font-family="Liberation Sans"')+`<path d="M13 0l1.500 2.500L13 5l-1.500-2.500z" fill="#ffef7a" stroke="#e0c000" stroke-width=".6"/>`,
cL:al([[0,16],[0,10],[0,16],[0,10],[0,16],[0,10]],'#111'), cC:al([[0,16],[3,10],[0,16],[3,10],[0,16],[3,10]]), cR:al([[0,16],[6,10],[0,16],[6,10],[0,16],[6,10]]), cJ:al([[0,16],[0,16],[0,16],[0,16],[0,16],[0,16]]),
cGlobe:`<circle cx="7" cy="6.500" r="6" fill="#3a56b8" stroke="#223"/><path d="M4 2q4-1 5 2L6 8 2 6z" fill="#4fae4f"/><rect x="5" y="9.500" width="6" height="4.500" rx="2.200" fill="none" stroke="#444" stroke-width="1.300"/><rect x="9" y="10.500" width="6.500" height="4.500" rx="2.200" fill="none" stroke="#444" stroke-width="1.300"/>`,
cGlobeG:`<g opacity=".45"><circle cx="7" cy="6.500" r="6" fill="#7a8ad0" stroke="#667"/><path d="M4 2q4-1 5 2L6 8 2 6z" fill="#7fae7f"/><rect x="5" y="9.500" width="6" height="4.500" rx="2.200" fill="none" stroke="#444" stroke-width="1.300"/><rect x="9" y="10.500" width="6.500" height="4.500" rx="2.200" fill="none" stroke="#444" stroke-width="1.300"/></g>`,
cAnch:`<circle cx="8" cy="2.500" r="1.800" fill="none" stroke="#33399a" stroke-width="1.400"/><path d="M8 4v11M4 7h8M1.500 9q0 6 6.500 6t6.500-6" fill="none" stroke="#33399a" stroke-width="1.600"/>`,
cImg:pic, cFlash:`<circle cx="8" cy="8" r="7" fill="#b9c9dc" stroke="#7f93ab"/><path d="M12 3Q8 3 7.500 7.500T4 13M6 8.500h4" stroke="#4a5a72" stroke-width="1.800" fill="none"/>`,
cTable:`<rect x=".8" y="1" width="14.400" height="14" fill="#fff" stroke="#555"/><rect x=".8" y="1" width="14.400" height="3" fill="#33399a"/><path d="M5.500 4v11M10.500 4v11M1 7.500h14M1 11.500h14" stroke="#aab"/>`,
cHr:`<path d="M1 8.500h14" stroke="#333" stroke-width="1.800"/><path d="M7 2.500h7M7 5h6M7 12.500h7M7 15h6" stroke="#999"/>`+tx('A',1,6,6,'#888')+tx('A',1,16,6,'#888'),
cCube:`<path d="M8 1l7 4v6l-7 4.500L1 11V5z" fill="#dedee4" stroke="#888"/><circle cx="8" cy="4" r="1.800" fill="#e33"/><path d="M1 5l7 3.500L15 5M8 8.500V15" stroke="#999" fill="none"/><path d="M3 12l2-4 1.500 5M11 9v3" stroke="#3a4ac0" fill="none" stroke-width="1.300"/>`,
cBreak:`<path d="M4 1h11v5H4zM4 10h11v5.500H4z" fill="#e6eef8" stroke="#8fa4c4"/><path d="M5 3h9M5 12.500h9" stroke="#8fa4c4"/><path d="M0 5l4 3-4 3z" fill="#5577b8"/>`,
cTC:tx('T',0,12,15,'#444','font-family="Liberation Serif"')+`<g transform="translate(7 7)"><rect width="8.500" height="8.500" fill="#333"/><path d="M1 1h3v3H1z" fill="#e33"/><path d="M4.800 1h3v3h-3z" fill="#4ad"/><path d="M1 4.800h3v3H1z" fill="#4b4"/><path d="M4.800 4.800h3v3h-3z" fill="#ee3"/></g>`,
cBC:`<path d="M1 8l5-6 5 5-5 6z" fill="#eee" stroke="#444"/><path d="M6 2V0" stroke="#444"/><g transform="translate(7 7)"><rect width="8.500" height="8.500" fill="#333"/><path d="M1 1h3v3H1z" fill="#e33"/><path d="M4.800 1h3v3h-3z" fill="#4ad"/><path d="M1 4.800h3v3H1z" fill="#4b4"/><path d="M4.800 4.800h3v3h-3z" fill="#c3e"/></g>`,
cMax:`<rect x=".8" y="1" width="14.400" height="14" fill="#8fb4ec" stroke="#e8eef8" stroke-width="1"/><rect x="2" y="2.200" width="12" height="11.600" fill="#7fa8e8" stroke="#2c5cc0" stroke-width="1"/><path d="M4 5h8M4 8h8M4 11h5" stroke="#fff"/>`,
cShow:doc(1,.8,12,14.500,'#f6f6f2','#999')+tx('¶',2,9,7,'#777')+`<circle cx="9.500" cy="9.500" r="3.200" fill="#9fdcdc" stroke="#555"/><path d="M12 12l3.500 3.500" stroke="#555" stroke-width="2"/>`,
cHelp:`<path d="M1 1h14v11h-4v3.500L8 12H1z" fill="#fbf5b0" stroke="#555"/>`+tx('?',4.500,11,12,'#33399a','font-weight="bold" font-family="Liberation Sans"'),
tinyD:`<path d="M2 4h12L8 12z" fill="#111"/>`, tinyU:`<path d="M1 15h14L8 4z" fill="#4a3a2a"/>`,
min:`<path d="M1 13h14" stroke="currentColor" stroke-width="4"/>`, max:`<rect x="2" y="2" width="12" height="12" fill="none" stroke="currentColor" stroke-width="3"/>`, cls:`<path d="M2 1l12 14M14 1L2 15" stroke="currentColor" stroke-width="3.500"/>`,
gmail:`<rect x="1" y="2" width="14" height="12" fill="#444" stroke="#722"/><path d="M2 13V3l6 6 6-6v10" stroke="#822" fill="none" stroke-width="2"/>`
};

class UiIcon extends HTMLElement{
  connectedCallback(){
    if(this.shadowRoot) return;
    const r=this.attachShadow({mode:'open'}), w=this.getAttribute('w')||16, h=this.getAttribute('h')||w;
    r.innerHTML=`<style>:host{display:block;flex:none;width:${w}px;height:${h}px}svg{display:block;width:100%;height:100%}</style><svg viewBox="0 0 16 16" preserveAspectRatio="none">${ICON[this.getAttribute('n')]||''}</svg>`;
  }
}
customElements.define('ui-icon',UiIcon);

/* Text run; "w" is the run's width in pixels, reached by spreading the letters. */
class UiText extends HTMLElement{
  connectedCallback(){
    if(this.shadowRoot) return;
    const r=this.attachShadow({mode:'open'});
    r.innerHTML=`<style>:host{display:inline-block;white-space:pre;flex:none}span{display:inline-block}::slotted(u){text-underline-offset:2px}</style><span><slot></slot></span>`;
    const w=+this.getAttribute('w'), n=this.textContent.length;
    if(w&&n){ const nat=r.querySelector('span').getBoundingClientRect().width; this.style.letterSpacing=((w-nat)/n).toFixed(3)+'px'; }
  }
}
customElements.define('ui-text',UiText);

const I=(n,w,h)=>`<ui-icon n="${n}" w="${w}" h="${h||w}"></ui-icon>`;
const T=(t,w,s='')=>`<ui-text w="${w||''}" style="${s}">${t}</ui-text>`;
const SEP='<i class="sep"></i>';
/* One bar of cells; each cell is as wide as the step to the next one. */
const row=(x0,h,items,style='',cls='')=>{
  let out=`<div class="row ${cls}" style="height:${h}px;padding-left:${items[0][0]-x0}px;${style}">`;
  items.forEach((it,i)=>{ const w=i<items.length-1?`width:${items[i+1][0]-it[0]}px`:''; out+=`<span style="${w}">${it[1]}</span>`; });
  return out+'</div>';
};
const el=(name,css,html)=>customElements.define(name,class extends HTMLElement{
  connectedCallback(){ if(this.shadowRoot) return; this.attachShadow({mode:'open'}).innerHTML=`<style>${BASE}${css}</style>${typeof html==='function'?html(this):html}`; }
});

/* drop-down button */
el('gtk-combo',`:host{flex:none}.btn{width:100%;height:100%;padding-left:6px}i{width:1px;background:#b5bbb3;height:74%;margin-left:auto}.a{width:24px;display:flex;justify-content:center}`,
 e=>`<div class="btn" style="${e.hasAttribute('off')?'background:#d0d5ce;color:#a0a69e;border-color:#b5bbb3':''}"><slot></slot><i></i><span class="a" style="width:${e.getAttribute('aw')||24}px">${e.hasAttribute('ud')?I('updown',8,14):I(e.hasAttribute('off')?'downg':'down',11,10)}</span></div>`);
const combo=(w,h,inner,attr='')=>`<gtk-combo style="width:${w}px;height:${h}px" ${attr}>${inner}</gtk-combo>`;

/* vertical scrollbar with a thumb */
el('gtk-scroll',`:host{width:16px;flex:none;background:#c7ccc5;border-left:1px solid #a9afa7;border-right:1px solid #a9afa7}.c{display:flex;flex-direction:column;height:100%}.b{flex:none;height:15px;display:flex;align-items:center;justify-content:center;background:#dde1dc}.t{flex:none;background:linear-gradient(90deg,#474c47,#626862 50%,#4e534e);border:1px solid #3c403b}`,
 e=>{const [pre,th,n]=e.getAttribute('geo').split(',').map(Number);return `<div class="c">${e.hasAttribute('top')?`<div class="b" style="${e.hasAttribute('soft')?'background:#c7ccc5':''}">${I(e.hasAttribute('soft')?'upg':'up',8,7)}</div>`:''}<div style="height:${pre}px;flex:none;background:${e.hasAttribute('lt')?'#d9ddd8':''}"></div><div class="t" style="height:${th}px"></div><div style="flex:1;background:${e.hasAttribute('lt')?'#d9ddd8':''}"></div>${n?`<div class="b" style="${e.hasAttribute('soft')?'background:#c7ccc5':''}">${I(e.hasAttribute('soft')?'upg':'up',8,7)}</div><div class="b" style="${e.hasAttribute('soft')?'background:#c7ccc5':''}">${I(e.hasAttribute('dim')?'downg':'down',8,7)}</div>`:''}</div>`});

/* rich text editor toolbar, 76px high with its lower edge */
const ckc=(w,bw,t='')=>`<span style="display:flex;width:${w}px;height:24px;border:1px solid #b9b9a5;background:#fff;align-items:center;color:#111"><span style="flex:1;padding-left:3px">${t}</span><span style="width:${bw}px;height:100%;background:#efefde;border-left:1px solid #b9b9a5;display:flex;align-items:center;justify-content:center">${I('tinyD',6,6)}</span></span>`;
el('ck-toolbar',`:host{background:#efefde;height:76px;overflow:hidden;font:12.500px "Liberation Sans",sans-serif;color:#555;border-bottom:2px solid #696965}
.w{display:flex;height:74px}.l{width:14px;flex:none;border-right:1px solid #8a8a80;display:flex;align-items:flex-end;justify-content:flex-end;padding:0 2px 2px 0}
.g{width:3px;height:15px;background:repeating-linear-gradient(#9a8f70 0 1px,transparent 1px 2px)}.s{width:1px;height:16px;background:#a8a87c}
.on{display:flex;align-items:center;justify-content:center;width:24px;height:24px;border:1px solid #2f62b8;background:#c0d2ee}`,()=>{
 const g='<i class="g"></i>',s='<i class="s"></i>',k=(n,w=15,h=15)=>I(n,w,h);
 return `<div class="w"><div class="l">${I('tinyU',8,5)}</div><div>`+
 row(14,25,[[17,g],[26,k('cSource',14,12)],[44,T('Source',35)],[87,k('cTempl',17)],[109,s],[117,k('cSave')],[141,k('cNew',13)],[164,k('cPrev',16)],[187,s],[195,k('cDoc',12)],[215,g],[226,k('cCut',11)],[248,k('cCopy',16,13)],[272,k('cPaste',16)],[297,k('cPasteT',15)],[320,k('cPasteW',16)],[342,s],[349,k('cPrint',17)],[374,k('cAbc',15)],[397,g],[406,k('cUndo',12,10)],[430,k('cRedo',12,10)],[450,s],[457,k('cFind',16)],[481,k('cRepl',17)],[503,s],[510,k('cSel',15)],[534,k('cErase',16,13)],[557,g],[565,k('cForm',15)],[591,k('cChk',13,13)],[615,k('cRad',12,12)],[637,k('cTxt',16,13)],[661,k('cArea',16)],[685,k('cList',15)],[709,k('cBtn',16,12)],[733,k('cImgB',15)],[757,k('cHid',15,13)]],'padding-top:1px')+
 row(14,24,[[17,g],[28,k('cB',11,14)],[51,k('cI',12,14)],[75,k('cU',12,15)],[97,k('cStrike',16,15)],[119,s],[128,k('cSub',12,14)],[152,k('cSup',13,14)],[173,g],[182,k('cOl',15)],[206,k('cUl',15)],[227,s],[233,k('cOut',17)],[257,k('cInd',17)],[283,k('cQ',15,14)],[306,k('cDiv',17)],[328,g],[333,`<i class="on">${k('cL',15,14)}</i>`],[362,k('cC',15,14)],[386,k('cR',15,14)],[409,k('cJ',15,14)],[432,g],[441,k('cGlobe',16)],[464,k('cGlobeG',16)],[490,k('cAnch',13)],[511,g],[515,`<i class="on" style="background:#dcecfb">${k('cImg',15,14)}</i>`],[543,k('cFlash',15)],[567,k('cTable',17,14)],[591,k('cHr',16)],[615,k('smile',16)],[639,k('cCube',16)],[663,k('cBreak',16)]])+
 row(14,25,[[17,g],[26,T('Style',24)],[55,ckc(102,15)],[162,T('Format',35)],[203,ckc(102,16,T('Normal',35))],[309,T('Font',22)],[335,ckc(102,15)],[443,T('Size',21)],[469,ckc(71,14)],[544,g],[552,k('cTC',17)+'&nbsp;'+I('tinyD',5,4)],[584,k('cBC',17)+'&nbsp;'+I('tinyD',5,4)],[615,g],[624,k('cMax',14,13)],[647,k('cShow',16)],[669,s],[677,k('cHelp',15,15)]])+
 `</div></div>`;});

/* ---------- top panel ---------- */
el('gnome-panel',`:host{height:25px;background:linear-gradient(#4a4a48,#3b3b39);border-bottom:1px solid #2a2a29;color:#dfdbd2;font:13.330px "DejaVu Sans",sans-serif}.ssh{border:1px solid #2c2c2b;height:23px;width:33px;padding-left:4px;display:flex;align-items:center}.h{width:4px;height:9px;background:repeating-linear-gradient(#222 0 1px,transparent 1px 4px)}`,
 ()=>row(0,24,[[9,I('ubuntu',21,21)],[37,T('Applications',88,'font-weight:bold')],[142,T('Places',48,'font-weight:bold')],[206,T('System',53,'font-weight:bold')],[268,I('firefox',23,22)],[293,I('chromium',22,22)],[318,I('evo',19,20)],[343,I('bblue',18,20)],[365,I('pidgin',21,21)],[390,I('cube',20,22)],[412,I('pw',24,24)],[476,I('netfolder',23,22)],[1028,T('--',10)],[1240,`<span class="ssh">${T('SSH',26)}</span>`],[1279,'<i class="h"></i>'],[1286,I('bblue',18,18)],[1309,I('burst',22,22)],[1335,I('net',22,19)],[1361,I('dropbox',15,16)],[1380,I('speaker',18,17)],[1405,'<i style="width:1px;height:22px;background:#2c2c2b"></i>'],[1415,T('Tue Mar  2, 12:41 PM',134)],[1565,I('newmail',22,18)],[1605,I('online',13,13)],[1622,T('flexgrip',50)]]));

/* ---------- mail window ---------- */
const menu=(x0,h,items,st)=>row(x0,h,items.map(([x,t,w])=>[x,T(t,w)]),st,'menu');
const FOLD=[['r','triD','On This Computer',132],['b','inbox','<b>Inbox (1)</b>',65],['m','drafts','Drafts',39],['m','junk','Junk',28],['m','outbox','Outbox',46],['m','sent','Sent',29],['m','templates','Templates',68],['m','trash','Trash',35],['r','triD','Arthur Mail',81],['sel','inbox','<b>Inbox (534)</b>',84],['f','folder','1. Todo',47],['f','folder','Drafts',39],['f','folder','Sent',29],['f','folder','sent-mail',61],['f','folder','Tech Squad',74],['f','folder','<b>Trash (1)</b>',66],['f','folder','Unimport...',74],['m','junk','Junk',28],['m','trash','Trash',35],['r','triR','Search Folders',109]];
const fold=([k,ic,t,w])=> k==='r'?row(0,23,[[ic==='triR'?4:3,I(ic,ic==='triR'?9:11,ic==='triR'?11:9)],[22,T('<b>'+t+'</b>',w)]])
 : k==='f'?row(0,23,[[56,I(ic,17,15)],[76,T(t,w)]])
 : k==='sel'?row(0,23,[[20,I('triD',11,9)],[39,I(ic,16)],[58,T(t,w)]],'background:linear-gradient(#8a9287,#9aa297);color:#fff')
 : row(0,23,[[38,I(ic,17,16)],[58,T(t,w)]]);
const MSG=[['envg',0,'Kim Boyd via RT &lt;tech-squad@arthuragency.com&gt;',335,'Re: [Arthur-C',85,1],['envg',0,'Chris Miller via RT &lt;tech-squad@arthuragency.com&gt;',345,'Re: [Arthur-C',85,1],['envg',1,'Dennis Poshard &lt;dennis@arthuragency.com&gt;',299,'The rest of them..',115],['envg',1,'Dennis Poshard &lt;dennis@arthuragency.com&gt;',299,'New charts',73],['replied',0,'susie chrostoski &lt;susiechrostoski@msn.com&gt;',304,'email password',103],['replied',0,'Chris Hagstrom &lt;chris@southernillinoisminers.com&gt;',347,'email',36],['envg',0,'Brad Redfearn &lt;primordialsoup77@gmail.com&gt;',314,'Fwd: h4o app dem',121],['envgs',0,'Cyndy Mitchell &lt;dmdc@mvn.net&gt;',224,'Fw: Help on Web',109],['replied',0,'Brad Redfearn &lt;primordialsoup77@gmail.com&gt;',314,'iphone app',72],['envg',1,'Dennis Poshard &lt;dennis@arthuragency.com&gt;',299,'SBA Charts',71]];
const msg=(m,i)=>row(169,24,[[174,I(m[0],17,15)],[202,m[1]?I('clip',12,17):''],[251,T(m[2],m[3])],[m[6]?754:722,T(m[4],m[5])]],(i===7?'background:linear-gradient(#8c9489,#9ea69b);color:#fff;':i%2?'background:#eee;':''));
const bl=(h,t='',w=0,s='')=>`<div style="height:${h}px;display:flex;align-items:center;${s}">${t?T(t,w):''}</div>`;
el('mail-window',`:host{width:1680px;height:1000px;background:#d4d9d2;color:#2e3430;font:13.330px "DejaVu Sans",sans-serif;overflow:hidden}
.title{background:linear-gradient(#474746,#353534);position:relative}.gt{border-radius:6px 6px 0 0;background:rgba(70,70,70,.55);border:1px solid #3a3a3a;border-bottom:0;height:21px;display:flex;align-items:center;gap:6px;padding:3px 0 0 10px;color:#242424;flex:none}
.name{position:absolute;left:667px;top:0;height:24px;display:flex;align-items:center;color:#8c8c8a;font-weight:bold}
.menu{background:#2f2f2f;color:#dfdbd2}
.side{width:168px;flex:none}.hd{margin:3px 0 0 3px;width:156px;height:29px;background:#9ea69b;color:#fff;flex:none}
.tree{margin-top:4px;width:162px;height:644px;border:1px solid #8f978c;background:#fff;color:#333;overflow:hidden;flex:none}
.bt{width:154px;height:31px;margin:8px 0 0 7px;padding-left:7px;gap:3px}
.tree b{font-weight:bold}
.list{height:247px;border:1px solid #868e83;border-right:0;background:#fff;color:#3f3f3f;overflow:hidden;width:1512px;flex:none}
.th{height:25px;background:linear-gradient(#fff,#f3f4f2 60%,#e3e6e2);border-bottom:1px solid #868e83;color:#333}
.rows{height:220px;overflow:hidden;display:flex;flex-direction:column;justify-content:flex-start}.rows>:first-child{margin-top:-8px}
.th>span{border-right:2px solid #9aa197;justify-content:flex-start}
.prev{margin-top:6px;flex:none;height:600px;width:1495px;border:1px solid #868e83;overflow:hidden}
.body{margin-left:6px;width:1482px;height:569px;border:1px solid #868e83;background:#fff;padding:11px 0 0 10px;color:#3a3a3a;font-size:12px;overflow:hidden}
a{color:#0000e0;text-decoration:underline}
.hdr{font-size:13px}`,()=>`
<div class="title row" style="height:24px;align-items:flex-end">
 <span style="width:24px;padding-left:5px;align-self:center;padding-bottom:3px">${I('env',17,12)}</span>
 <div class="gt" style="width:179px;padding-left:12px"><span>${T('Search Drupal « Goo...',135)}</span><span style="padding-left:12px">×</span></div>
 <div class="gt" style="width:195px">${I('gmail',15,12)}${T('Connie says...',79)}<span style="padding-left:70px">×</span></div>
 <div class="gt" style="width:194px">${T('eMachines ET1331G-...',138,'padding-left:17px')}<span>×</span></div>
 <div class="gt" style="width:300px">${T('Google Voice - SMS (...',134,'padding-left:17px')}</div>
 <div class="name">${T('Inbox (534 unread, 596 total) - Evolution',307)}</div></div>
${menu(0,22,[[8,'<u>F</u>ile',23],[47,'<u>E</u>dit',25],[88,'<u>V</u>iew',31],[136,'F<u>o</u>lder',40],[192,'<u>M</u>essage',57],[265,'<u>S</u>earch',44],[325,'<u>H</u>elp',30]])}
${row(0,40,[[8,I('newmail',20,19)],[33,T('New',28)],[70,I('down',11,10)],[95,SEP],[110,I('sendrecv',20,19)],[132,T('Send / Receive',96)],[239,SEP],[253,I('reply',21,20)],[276,T('Reply',36)],[326,I('replyall',22,20)],[349,T('Reply to All',74)],[437,I('forward',22,20)],[460,T('Forward',52)],[523,SEP],[537,I('print',22,20)],[573,I('no',21,19)],[610,I('junk',20,19)],[645,I('junkx',22,20)],[681,I('stop',21,20)],[715,SEP],[730,I('greenL',20,20)],[765,I('greenR',21,20)]])}
<div style="display:flex;height:914px">
 <div class="side col">
  <div class="hd">${row(3,29,[[10,I('envw',15,10)],[31,T('<b>In...</b>',27)],[67,T('534 un...6 total',86,'font-size:11.500px;color:#eceeeb')]])}</div>
  <div class="tree">${FOLD.map(fold).join('')}</div>
  ${[['mailbtn','Mail',27],['contacts','Contacts',57],['cal','Calendars',65],['tasks','Tasks',37],['memos','Memos',47]].map((b,i)=>`<div class="btn bt" style="${i?'':'background:linear-gradient(#aeb6ab,#a2aa9f);border-color:#8c9489;'}">${I(b[0],16,b[0]==='mailbtn'?11:15)}${T(b[1],b[2])}</div>`).join('')}
  <div style="padding:17px 0 0 9px">${I('plug',27,13)}</div>
 </div>
 <div class="col" style="width:1512px;flex:none">
  ${row(168,29,[[168,T('Sho<u>w</u>:',39)],[213,combo(214,26,T('All Messages',84),'ud aw="19"')]],'')}
  <div class="list"><div class="th row"><span style="width:26px;padding-left:4px">${I('newmail',16,15)}</span><span style="width:26px;padding-left:6px">${I('clip',12,16)}</span><span style="width:26px;padding-left:3px">${I('warn',17,15)}</span><span style="width:471px;padding-left:4px">${T('From',32)}</span><span style="padding-left:4px;border:0">${T('Subject',48)}</span></div>
   <div class="rows">${MSG.map(msg).join('')}</div></div>
  <div style="display:flex"><div class="prev"><div style="height:23px;display:flex;align-items:flex-start;padding-left:29px;color:#1c1c1c"><span style="display:flex;gap:7px;margin-top:-4px">${T('<b>Date:</b>',40)}${T('03/01/2010 04:50:52 PM',155)}</span></div>
   <div class="body">${bl(14,'Ray,',26)}${bl(17)}${bl(14,'Just a follow up to see if you can assist me with the request below.',401)}${bl(17)}${bl(14,'Thank you,',67)}${bl(14,'Cyndy Mitchell',88)}${bl(17)}
   <div class="hdr">${bl(17,'----- Original Message -----',170)}${bl(17,'<b>From:</b> <a>Cyndy Mitchell</a>',143,'background:#e3e3e3')}${bl(17,'<b>To:</b> <a>Ray Arthur Agency</a>',148)}${bl(17,'<b>Sent:</b> Friday, February 19, 2010 3:56 PM',262)}${bl(17,'<b>Subject:</b> Help on Web site',174)}</div>
   ${bl(34)}${bl(14,'Ray,',26)}${bl(17)}${bl(14,'Clint told me to contact you if I needed any assistance with our website <a>www.downtownmtvernon.org</a>.  I ha',650)}${bl(14,'it, not the date of the event.  What do I need to do?  Also, if I remember correctly, I am suppose to contact',648)}${bl(17)}${bl(14,'Thanks,',47)}${bl(28)}${bl(14,'Cyndy Mitchell,  Executive Director',211)}${bl(14,'Downtown Mt. Vernon Development Corporation DMDC',333)}${bl(14,'A Main Street Community',155)}${bl(14,'..............................................................................................................',440,'color:#7a4a20')}${bl(14,'809 Main Street',97)}${bl(14,'Mt. Vernon, IL  62864',132)}${bl(14,'618.242.6866',88)}${bl(14,'618.242.6868 fax',110)}${bl(14,'<a>dmdc@mvn.net</a>',98)}${bl(14,'<a>www.downtownmtvernon.org</a>',179)}${bl(14,'<a>www.mtvernon.com</a>, <a>www.downtownmtvernon.com</a>',315)}${bl(14,'"For community pride today and for future generations tomorrow"',401)}</div></div>
   <gtk-scroll geo="0,569,2" dim style="height:600px;margin-top:6px;margin-left:1px"></gtk-scroll></div>
 </div>
</div>`);

/* ---------- composer ---------- */
const day=a=>[927,954,981,1009,1037,1062,1087].slice(0,a.length).map((x,i)=>[x,T(a[i],15.5)]);
const mono=(t,w)=>`<div style="height:17px;display:flex;align-items:center">${T(t,w)}</div>`;
el('compose-window',`:host{width:844px;height:757px;color:#2e3430;font:13.330px "DejaVu Sans",sans-serif;border:1px solid #3a3a38;border-left-width:2px;border-bottom-width:3px;border-top:0;box-shadow:0 3px 12px 1px rgba(0,0,0,.6);border-radius:6px 6px 0 0;overflow:hidden;background:linear-gradient(transparent 23px,#d4d9d2 23px)}
.title{background:linear-gradient(rgba(58,58,57,.88),rgba(50,50,50,.93));color:#777775}.menu{background:#2f2f2f;color:#dfdbd2}
.tb{background:linear-gradient(#adb5ab,#b5bcb2 30%,#d4d9d2)}
.sep{background:#a2aa9f}.on{width:34px;height:34px;border:1px solid #868e83;border-radius:3px;background:#b1b8ae;display:flex;align-items:center;padding-left:5px}
.ed{width:826px;height:395px;background:#fff;border:1px solid #868e83;overflow:hidden;flex:none;display:flex;flex-direction:column}
.shot{display:grid;grid-template-columns:51px 26px 374px;margin-left:9px;height:176px;flex:none}
.shot>*{grid-row:1}.calp{grid-column:2/4;width:187px;height:90px;margin-left:24px;background:#fff;border:1px solid #888;border-top:0;z-index:1;color:#111;font:14.500px "Liberation Sans",sans-serif;border-left:1px solid #fff;position:relative}
a{color:#0000e0;text-decoration:underline}.mono{font-family:"DejaVu Sans Mono",monospace;color:#4a4038;padding-left:9px}`,()=>`
${row(837,23,[[839,I('newmail',16,16)],[1145,T('Re: Fw: Help on Web site',185,'font-weight:bold')],[1623,I('min',9,9)],[1646,I('max',9,9)],[1661,I('cls',10,9)]],'','title')}
${menu(837,23,[[844,'<u>F</u>ile',23],[883,'<u>E</u>dit',25],[924,'<u>V</u>iew',32],[972,'<u>I</u>nsert',37],[1025,'For<u>m</u>at',46],[1087,'<u>S</u>ecurity',52]])}
${row(837,40,[[846,I('sent',20,19)],[868,T('Send',32)],[912,SEP],[925,I('savedraft',22,19)],[960,SEP],[976,I('undo',18,18)],[1009,I('redo',18,18)],[1044,SEP],[1059,I('cut',19,20)],[1095,I('copy',19,19)],[1131,I('paste',20,20)],[1164,SEP],[1177,I('mag',20,18)],[1213,I('findrep',22,19)]],'','tb')}
${row(837,50,[[849,T('Fr<u>o</u>m:',37)],[901,combo(563,28,T('Raymond Aguilar &lt;ray@arthuragency.com&gt;',289))],[1471,T('Si<u>g</u>nature:',65)],[1543,combo(128,28,T('Arthur',40),'aw="23"')]])}
${row(837,26,[[843,`<span class="btn" style="width:50px;height:26px;justify-content:center">${T('<u>T</u>o:',19)}</span>`],[901,`<span class="in" style="width:770px;height:25px;padding-left:4px">${T('Cyndy Mitchell &lt;dmdc@mvn.net&gt;',225)}</span>`]],'margin-top:-3px')}
${row(837,26,[[843,`<span class="btn" style="width:50px;height:26px;justify-content:center">${T('<u>C</u>c:',20)}</span>`],[901,`<span class="in" style="width:770px;height:25px;padding-left:4px">${T('Clint Eilerts Arthur Agency &lt;clint@arthuragency.com&gt;',355)}</span>`]],'margin-top:9px')}
${row(837,26,[[842,T('S<u>u</u>bject:',52)],[901,`<span class="in" style="width:770px;height:25px;padding-left:4px">${T('Re: Fw: Help on Web site',163)}</span>`]],'margin-top:9px;margin-bottom:9px')}
${row(837,40,[[839,combo(94,34,T('HTML',37),'aw="22"')],[942,SEP],[948,combo(164,34,T('Normal',47),'aw="22"')],[1119,SEP],[1126,`<span class="on">${I('alL',20,19)}</span>`],[1168,I('alC',21,20)],[1205,I('alR',21,20)],[1239,SEP],[1252,I('outd',21,19)],[1288,I('ind',21,19)]],'','tb')}
${row(837,41,[[839,combo(49,34,T('+0',20),'aw="21"')],[891,combo(53,34,'<i style="display:block;width:19px;height:23px;background:#000;border:1px solid #888;margin:0"></i>','aw="22"')],[951,SEP],[962,I('tt',23,21)],[1001,I('ab',20,19)],[1038,I('ai',20,19)],[1075,I('au',18,20)],[1109,I('as',20,19)],[1143,SEP],[1156,I('gimg',22,20)],[1192,I('glink',22,20)],[1227,I('grule',24,20)],[1265,I('gtable',20,18)],[1301,I('gsmile',21,20)]],'','tb')}
<div style="display:flex"><div class="ed">
 <div class="shot"><div style="grid-column:1;background:#eceff4"></div>
  <div class="calp">${row(923,28,day(['14','15','16','17','18','19','20']))}${row(923,18,day(['21','22','23','24','25','26','27']))}${row(923,23,day(['28','29','30','31']))}<div style="height:20px;background:#ededed;display:flex;justify-content:space-between;align-items:center;font-size:12.500px;padding-right:3px;border-left:1px solid #888;margin-left:-1px"><span style="background:#fff">${T('Clear',31)}</span><span style="background:#fff">${T('Close',33)}</span></div></div>
  <div style="grid-column:3;border-top:1px solid #d5e0ee"><ck-toolbar style="margin-top:53px;width:374px"></ck-toolbar><div style="height:46px;background:#ebf3fb;border-left:1px solid #696965"></div></div></div>
 <div style="height:51px;flex:none;display:flex;align-items:center;padding-left:9px;color:#3a3a3a">${T('As far as putting images into your pages, calendar events, or news goes; You have a button in the content editor called',774)}</div>
 <div class="mono" style="margin-top:8px">${mono('--',16)}${mono('Raymond Aguilar',120)}${mono('Arthur Agency',104)}${mono('Lead Developer | Interactive',224)}${mono('104 E Jackson',104)}${mono('Carbondale, IL 62901',160)}${mono('<a>ray@arthuragency.com</a>',160)}${mono('p.618.241.0337',112)}${mono('f.618.519.9617',112)}${mono('tf.866.311.3280',120)}</div></div>
 <gtk-scroll top lt geo="76,92,2" style="height:395px"></gtk-scroll></div>
${row(837,44,[[843,I('triR',9,13)],[858,T('Show <u>A</u>ttachment Bar',141)],[1443,`<span class="btn" style="width:126px;height:32px;justify-content:center">${T('A<u>d</u>d Attachment...',117)}</span>`],[1578,combo(97,32,T('Icon View',62),'off aw="20"')]],'padding-top:4px')}`);

/* ---------- browser ---------- */
const tab=(w,ic,t,tw,on,iw=16)=>`<div class="tab ${on?'on':''}" style="width:${w}px">${I(ic,iw,16)}<span style="width:4px;flex:none"></span>${T(t,tw)}<span style="margin-left:auto">${I('redX',15,14)}</span></div>`;
const lk=(t,w,s='')=>T(t,w,'color:#1c86c8;'+s);
el('town-page',`:host{width:1425px;height:696px;flex:none;overflow:hidden;font:12.500px "DejaVu Sans",sans-serif;color:#0a1a24;background:#cad6e6}
.banner{height:121px;background:linear-gradient(#06416a,#1b6493 30%,#3a8abf 68%,#57b2eb 96%,#4698cc);border-top:1px solid #fff;display:flex;flex-direction:column}
.nav{color:#fff}.nav ui-icon{flex:none}
.low{height:564px;border-top:1px solid #fff;display:flex;background:linear-gradient(#cbd7e6,#e9edf5 150px,#eceff5 165px)}
.main{width:1062px;margin-top:-33px;padding:1px 0 0 26px;background:linear-gradient(90deg,rgba(160,185,205,.3),transparent 40px,transparent 1020px,rgba(160,185,205,.3)) 0 0/100% 31px no-repeat,linear-gradient(#d2e7f5 31px,#fff 31px,#fff 32px,#e9edf6 33px,#fdfdfe 110px,#fff 120px);border-left:1px solid #fff;border-top:1px solid #fff;box-shadow:0 0 3px #5a86a8}
.main b{font-weight:bold}.fld{border:1px solid #666;border-radius:2px;background:#fff;box-shadow:inset 0 1px #ddd;font-size:13.330px}
h1,h2{margin:0;font:bold 27px "Liberation Sans",sans-serif}h2{font:20px "Liberation Sans",sans-serif}
.ck{width:1009px;border-right:1px solid #696965;position:relative}
.tip{position:absolute;left:529px;top:66px;width:119px;height:25px;background:linear-gradient(#fbfbc8,#f2f2a6);border:1px solid #b8b84c;box-shadow:2px 4px 6px rgba(0,0,0,.35);display:flex;align-items:center;padding-left:3px;color:#222;font-size:13.330px}`,()=>{
 const X=1680,nav=[[2388,'home',34,2404],[2458,'About Us',54,2484],[2548,'property',50,2572],[2634,'Business Directory',110,2688],[2780,'members',56,2807],[2872,'Links',31,2887],[2939,'Contact Us',65,2971]];
 const tri='<svg width="12" height="9" style="display:block"><path d="M0 0h12L6 8.500z" fill="#7d8fa0" stroke="#dfe9f0" stroke-width="1"/></svg>';
 return `<div style="height:12px"></div><div class="banner">
 ${row(X,9,nav.map(n=>[n[3]-6,tri]))}${row(X,20,nav.map(n=>[n[0],T(n[1],n[2],'color:#f2f8fc')]),'','nav')}
 <div style="padding:16px 0 0 78px;color:#fff;line-height:34px"><h1>${T('Downtown Mt. Vernon Development',468,'text-shadow:0 2px 2px #0a3c86')}</h1></div></div>
 <div class="low"><div style="width:287px;flex:none;padding-top:18px">
  <h2 style="height:26px;padding-left:78px;display:flex;align-items:center">${T('admin',52)}</h2>
  <div style="font-size:12.800px">${row(X,32,[[1760,I('triDg',8,8)],[1776,lk('Create content',88)]])}
  ${row(X,18,[[1784,I('ring',7,7)],[1800,T('Calendar Events',97,'color:#111')]])}
  ${row(X,30,[[1784,I('ring',7,7)],[1800,lk('News',32)]])}
  ${row(X,20,[[1784,I('ring',7,7)],[1800,lk('Page',28)]])}
  ${row(X,38,[[1760,I('triRg',8,9)],[1776,lk('Administer',64)]])}
  ${row(X,10,[[1760,I('ring',7,7)],[1776,lk('Log out',44)]])}</div></div>
 <div class="main"><div style="height:33px;display:flex;align-items:center;font-size:11.500px;margin-left:-1px">${T('Home › Create content',130,'color:#5a9fd6')}</div>
  <h2 style="height:24px;margin-top:16px;display:flex;align-items:center;margin-left:-1px">${T('Create Calendar Events',206)}</h2>
  <div style="height:22px;display:flex;align-items:center;gap:6px;margin-left:-1px">${T('<b>date:</b>',34)}${T('<b>*</b>',7,'color:#00e')}</div>
  <div class="fld" style="width:178px;height:22px;display:flex;align-items:center;padding-left:3px">${T('March 2, 2010',88)}</div>
  <div style="height:20px;display:flex;align-items:center;font-size:11px;color:#777;margin-left:-1px">${T('Format: March 2, 2010',116)}</div>
  <div style="height:20px;margin-top:18px;display:flex;align-items:center;gap:6px;margin-left:-1px">${T('<b>Title:</b>',34)}${T('<b>*</b>',7,'color:#00e')}</div>
  <div class="fld" style="width:963px;height:22px"></div>
  <div style="height:16px;margin-top:16px;width:1009px;display:flex;align-items:center;margin-left:-1px"><i style="width:12px;height:1px;background:#d3dbe6;margin-right:4px"></i>${I('triRg',8,9)}<span style="width:14px"></span>${lk('Menu settings',84)}<i style="flex:1;height:1px;background:#d3dbe6;margin-left:3px"></i></div>
  <div style="height:20px;margin-top:13px;display:flex;align-items:center;padding-left:776px">${I('checkg',12,12)}<span style="width:8px"></span>${T('Show summary in full view',161)}</div>
  <div style="height:19px;margin-top:-8px;display:flex;align-items:center;margin-left:-1px">${T('<b>Event Description:</b>',122)}</div>
  <div class="ck"><ck-toolbar></ck-toolbar><div style="height:252px;background:#ebf3fb;border-left:1px solid #696965"></div><div class="tip">${T('Insert/Edit Image',111)}</div></div>
 </div></div>`;});
el('fox-window',`:host{width:1440px;height:900px;background:#d4d9d2;color:#2e3430;font:13.330px "DejaVu Sans",sans-serif;overflow:hidden}
.title{color:#fff;border-top:1px solid #9a9c98;background:linear-gradient(rgba(20,20,20,0) 20%,rgba(20,20,20,.45)),linear-gradient(90deg,#2b2b29,#33382c 15%,#50693a 40%,#50693a 60%,#33382c 85%,#2b2b29);text-shadow:0 1px 1px #000}
.menu{background:#2f2f2f;color:#dfdbd2}.tb{background:linear-gradient(#adb5ab,#d4d9d2)}
.tabs{display:flex;align-items:flex-end;height:25px;margin-top:-1px}.tab{height:24px;border:1px solid #a2a99f;border-width:1px 1px 1px 0;background:linear-gradient(#e0e3df,#cdd2cb);display:flex;align-items:center;padding:0 10px 0 6px;flex:none}.tab.on{height:26px;background:linear-gradient(#fdfdfd,#e9ecea);border-bottom:0}
`,()=>{const X=1680;return `
${row(X,20,[[1684,I('firefox',18,16)],[2093,T('Create Calendar Events | Downtown Mt. Vernon Development - Mozilla Firefox',575,'font-weight:bold')],[3065,I('min',8,8)],[3086,I('max',8,8)],[3105,I('cls',9,9)]],'','title')}
${menu(X,27,[[1688,'<u>F</u>ile',23],[1727,'<u>E</u>dit',25],[1768,'<u>V</u>iew',32],[1816,'Hi<u>s</u>tory',46],[1879,'<u>B</u>ookmarks',74],[1969,'<u>T</u>ools',34],[2019,'<u>H</u>elp',30]],'padding-top:3px')}
${row(X,40,[[1688,I('greenL',20,19)],[1724,I('fwdg',20,19)],[1760,I('down',10,9)],[1784,I('reload',21,19)],[1820,I('stopg',20,19)],[1854,I('home',24,20)],[1890,I('person',16,16)],[1917,`<span class="in" style="width:906px;height:24px"><span style="width:27px;height:100%;background:#d9ddd8;border-right:1px solid #aaa;display:flex;align-items:center;justify-content:center">${I('globe',16,16)}</span><span style="padding-left:4px;flex:1">${T('http://www.downtownmtvernon.org/?q=node/add/calendar-events',428)}</span>${I('starO',17,16)}<span style="width:3px"></span>${I('down',11,9)}<span style="width:5px"></span></span>`],[2833,`<span class="in" style="width:282px;height:24px"><span style="width:38px;height:100%;background:#d4d9d2;border-right:1px solid #aaa;display:flex;align-items:center;padding-left:3px;gap:3px">${I('google',16,16)}${I('down',11,9)}</span><span style="padding-left:4px;flex:1">${T('arthur agency round cube',166)}</span>${I('mag',17,16)}<span style="width:2px"></span></span>`]],'','tb')}
${row(X,36,[[1686,I('folderBm',15,15)],[1704,T('Most Visited',80)],[1789,I('down',10,8)],[1814,I('dino',16,15)],[1832,T('Getting Started',98)],[1943,I('rss',16,16)],[1961,T('Latest Headlines',108)],[2074,I('down',11,8)]],'padding-bottom:3px','tb')}
<div class="tabs" style="padding-left:1px">${tab(231,'ncheap','Namecheap.com - Mem...',167,0)}${tab(230,'coupon','NameCheap Coupon Co...',167,0)}${tab(229,'plesk','Parallels Plesk Control P...',171,0)}${tab(229,'globe','Create Calendar Events |...',173,1)}${tab(230,'google','arthur agency round cub...',171,0)}${tab(230,'drupal','Content | www.foundati...',166,0,15)}<span style="padding:0 17px 4px 8px">${I('plus',17,17)}</span><span style="padding-bottom:8px">${I('down',11,9)}</span></div>
<div style="display:flex;height:696px"><town-page></town-page><gtk-scroll top soft geo="0,240,2" style="height:696px;width:15px"></gtk-scroll></div>
<div style="border-top:1px solid #a2a99f">${row(X,32,[[1687,I('redX',15,14)],[1714,T('Find:',30)],[1751,`<span class="in" style="width:183px;height:26px;padding-left:6px">${T('calendar',56)}</span>`],[1943,I('greenL',14,14)],[1960,T('<u>P</u>revious',55)],[2028,I('greenR',15,14)],[2046,T('<u>N</u>ext',31)],[2089,I('hl',16,15)],[2107,T('Highlight <u>a</u>ll',78)],[2199,'<i style="width:12px;height:13px;border:1px solid #8c9289;border-radius:3px;background:#fff"></i>'],[2216,T('Mat<u>c</u>h case',73)]],'border-top:1px solid #f5f6f4')}</div>
${row(X,24,[[1688,T('Done',34)],[2842,I('bug',16,15)],[2871,I('magl',14,15)],[2892,T('SenSEO',50)],[2959,I('ssync',15,15)],[2989,I('person',14,20)],[3010,T('anonymous',76)],[3100,I('lego',16,14)]],'border-top:1px solid #a9afa7')}`;});

/* ---------- task bar ---------- */
el('task-bar',`:host{height:26px;background:#3b3b39;border-top:2px solid #4d534e;font:13.330px "DejaVu Sans",sans-serif;color:#dfdbd2}
.t{display:flex;align-items:center;height:22px;border:1px solid #2a2a29;background:linear-gradient(#454543,#3c3c3a);padding-left:6px;gap:8px;flex:none}`,()=>{
 const t=(w,ic,s,tw,st='')=>`<span class="t" style="width:${w}px;${st}">${I(ic,16,14)}${T(s,tw)}</span>`,G='background:#465238;border-color:#55663f;';
 return row(0,24,[[3,I('desk',17,14)],[27,'<i style="width:4px;height:9px;background:repeating-linear-gradient(#222 0 1px,transparent 1px 4px)"></i>'],[35,t(123,'envw','Inbox (534...',82)],[160,t(123,'greendot','megan be...',78)],[285,t(123,'firefox','Create Cal...',81,'background:linear-gradient(#737c74,#828b82);')],[410,t(124,'chromium','Connie say...',85)],[536,t(123,'fileman','js - File Br...',78)],[661,t(123,'pidgin','<b>Buddy List</b>',76,G)],[787,t(122,'term','raguilar@i...',79)],[911,t(124,'update','<b>[Update ...</b>',78,G)],[1037,t(123,'drafts','form2edit....',81)],[1162,t(123,'firefox','ion.arthura...',84)],[1287,t(124,'newmail','Re: Fw: Hel...',85)],
 [1413,`<svg width="240" height="22" style="display:block"><rect width="240" height="22" fill="#2a2a2a"/><rect x="60" y="1" width="60" height="21" fill="#3c5030"/><path d="M60 0v22M120 0v22M180 0v22" stroke="#3a3a38"/><rect x="17.500" y="12.500" width="12" height="9" fill="#4f6d38" stroke="#fff"/><rect x="61.500" y="1.500" width="31" height="18" fill="#4a6636" stroke="#fff"/><path d="M70 4h7v10h-7zM70 4l5 5-5 5" fill="#ddd" stroke="#666"/><rect x="77.500" y="2.500" width="15" height="12" fill="#4a6636" stroke="#fff"/><rect x="93.500" y="1.500" width="26" height="16" fill="#6d9648" stroke="#fff"/></svg>`],[1656,I('trash',21,21)]]);});

el('desk-top',`:host{position:relative;width:3120px;height:1050px;background:#000;overflow:hidden}
gnome-panel,mail-window,compose-window,fox-window,task-bar{position:absolute}
gnome-panel{left:0;top:0;width:1680px}mail-window{left:0;top:24px}compose-window{left:835px;top:25px}task-bar{left:0;top:1024px;width:1680px}fox-window{left:1680px;top:0}.clip{position:absolute;left:0;top:0;width:1680px;height:1050px;overflow:hidden}`,
 `<div class="clip"><mail-window></mail-window><compose-window></compose-window><gnome-panel></gnome-panel><task-bar></task-bar></div><fox-window></fox-window>`);
</script>
</body>
</html>
